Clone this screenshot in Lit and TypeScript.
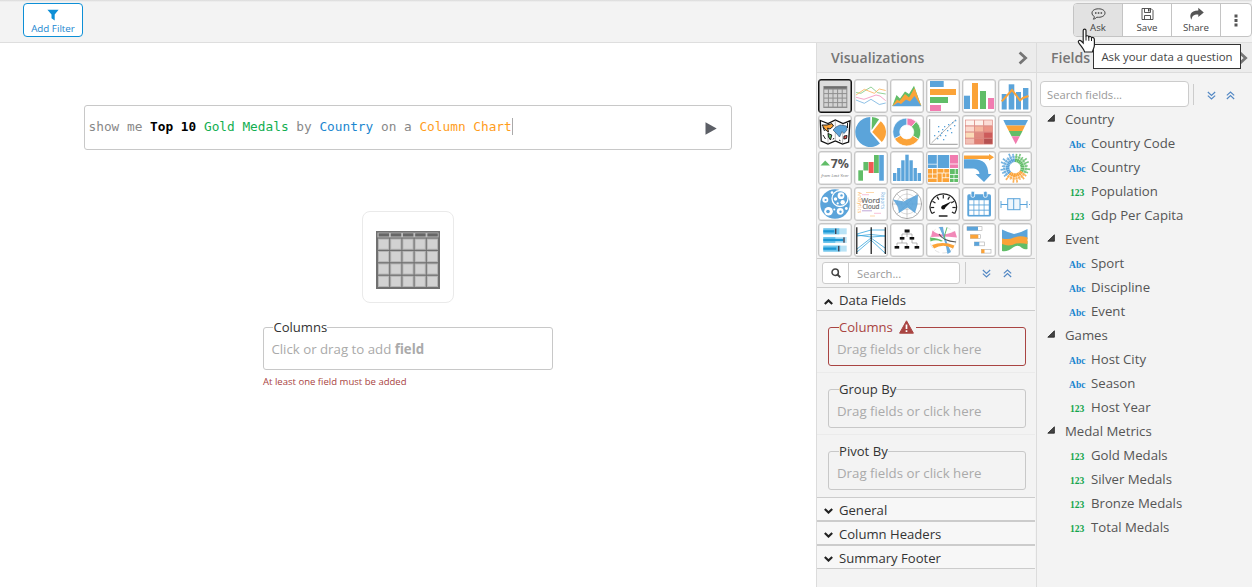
import { LitElement, html, svg, css } from "lit";
import { customElement, property } from "lit/decorators.js";

const B = "#5ba4da", O = "#fba338", G = "#61bd68", P = "#f17cb0", R = "#f15854";

const rects = (color: string, list: number[][]) =>
  list.map(([x, y, w, h]) => svg`<rect x=${x} y=${y} width=${w} height=${h} fill=${color}></rect>`);

const arc = (cx: number, cy: number, r: number, a0: number, a1: number, inner = 0) => {
  const p = (a: number, q: number) => {
    const t = ((a - 90) * Math.PI) / 180;
    return `${(cx + q * Math.cos(t)).toFixed(2)} ${(cy + q * Math.sin(t)).toFixed(2)}`;
  };
  const big = a1 - a0 > 180 ? 1 : 0;
  return inner
    ? `M${p(a0, r)}A${r} ${r} 0 ${big} 1 ${p(a1, r)}L${p(a1, inner)}A${inner} ${inner} 0 ${big} 0 ${p(a0, inner)}Z`
    : `M${cx} ${cy}L${p(a0, r)}A${r} ${r} 0 ${big} 1 ${p(a1, r)}Z`;
};

const sunburst = () => {
  const out: unknown[] = [];
  for (let i = 0; i < 24; i++) {
    const a = i * 15;
    const c = a < 120 ? G : a < 225 ? O : B;
    const len = [14, 15.2, 12.8, 15, 13.2, 14.6][(i * 5 + (i >> 2)) % 6];
    out.push(svg`<path d=${arc(17, 16.7, 9.2, a, a + 14, 5.6)} fill=${c}></path>
      <path d=${arc(17, 16.7, 12, a + 1, a + 13, 9.5)} fill=${c} opacity=".85"></path>
      <path d=${arc(17, 16.7, len, a + 3, a + 10, 12)} fill=${c} opacity=".85"></path>`);
  }
  return out;
};

const gaugeTicks = () =>
  [-90, -60, -30, 0, 30, 60, 90].map(
    (a) => svg`<path d="M17.3 8v3.4" transform="rotate(${a} 17.3 20.5)"></path>`
  );

const icons = [
  // table
  svg`<rect x="5.3" y="7" width="24" height="22" fill="#8f8f8f"></rect>
    ${rects("#6d6d6d", [[6, 7.5, 22.6, 2]])}
    ${[0, 1, 2, 3].map((r) => rects("#d3d3d3", [0, 1, 2, 3, 4].map((c) => [6.3 + c * 4.6, 10.6 + r * 4.5, 3.6, 3.5])))}`,
  // line
  svg`<g fill="none" stroke-width="0.8" opacity=".85"><path stroke=${G} d="M2 13.5L7 14.3 12 11 17 8 23.7 13.7 31.7 15"></path>
    <path stroke=${O} d="M2 16L10.3 10.3 20.3 14.3 25.3 10 31.7 11.5"></path>
    <path stroke=${P} d="M2 18.3L10 20.3 22 16 26 17 31.7 21.7"></path>
    <path stroke=${B} d="M2 21L10.3 24.3 17 20.3 25.3 25.5 31.7 24"></path></g>`,
  // area
  svg`<path fill=${G} d="M2.3 27L6.5 16 10 19.5 15 12.5 19 15 24 6.7 31.3 27z"></path>
    <path fill=${O} d="M2.3 27L7 20.5 9.5 22 15 15 19 18.5 24.5 9 31.3 27z"></path>
    <path fill=${B} d="M2.3 27.3L8 23.5 11 25 16 20.5 20 22.5 24.5 17 31.3 27.3z"></path>`,
  // bar
  [rects(B, [[4, 2, 13.7, 6]]), rects(O, [[4, 10, 26, 6]]), rects(G, [[4, 18, 18, 6]]), rects(P, [[4, 26, 11, 6]])],
  // column
  [rects(B, [[2, 16.7, 6, 13.3]]), rects(O, [[10, 4, 6, 26]]), rects(G, [[18, 12, 6, 18]]), rects(P, [[26, 19, 6, 11]])],
  // combo
  svg`${rects(B, [[3.7, 15, 5, 15.5], [10.7, 5.3, 5.6, 25.2], [18, 13, 5, 17.5], [25, 9, 5.4, 21.5]])}
    <path d="M3.7 22.3L14 11 22 21.3 25 19 30.5 17" fill="none" stroke=${O} stroke-width="2"></path>`,
  // map
  svg`<path d="M2.3 5.5L10 8.6 17.3 5 25 8.6 32 5.8 30.6 27 24.5 29 17.3 26 10 29 3.2 26z" fill="#fff" stroke="#111" stroke-width="1.3"></path>
    <path d="M10 8.6V29M17.3 5V26M25 8.6L24.5 29" stroke="#777" stroke-width=".5"></path>
    <path d="M4 10L9 10 14 8.6 15.5 11 12 14 9.6 13 10.5 17 7 14.5z" fill=${O} stroke="#111" stroke-width=".9"></path>
    <path d="M15 15L18 12 22 10 28.5 11 29 15 26 18.5 24 16.5 21.5 22 18 18z" fill=${B} stroke="#3b5e80" stroke-width=".7"></path>
    <path d="M10 18.5L13.8 20 12.5 25 10.5 22z" fill=${G} stroke="#111" stroke-width=".9"></path>
    <path d="M26 21L29 20.5 28.5 23.5 25.8 24z" fill=${R} stroke="#111" stroke-width=".9"></path>
    <path d="M5 12l1.5 4M5 20l2.5 4M21 25l1.5.8M15 24.5l1-1.5M29.5 8v5" stroke="#222" stroke-width="1"></path>`,
  // pie
  svg`<path d=${arc(16.3, 17, 15, 140, 360)} fill=${B}></path>
    <path d=${arc(17.6, 15, 13, 2, 35)} fill=${G}></path><path d=${arc(18.2, 17, 13.8, 38, 136)} fill=${O}></path>`,
  // donut
  svg`<g stroke="#fff" stroke-width=".7"><path d=${arc(16.8, 17, 14, 0, 42, 7)} fill=${P}></path><path d=${arc(16.8, 17, 14, 42, 122, 7)} fill=${G}></path>
    <path d=${arc(16.8, 17, 14, 122, 242, 7)} fill=${O}></path><path d=${arc(16.8, 17, 14, 242, 360, 7)} fill=${B}></path></g>`,
  // scatter
  svg`<path d="M3.7 4V29.3H31.7" stroke="#999" fill="none" stroke-width="1"></path><path d="M5.5 28L30 4.5" stroke="#aaa" stroke-width=".9"></path>
    ${rects(B, [[12, 11, 1.3, 1.3], [8, 20, 1.3, 1.3], [12, 16, 1.3, 1.3], [11, 23, 1.3, 1.3], [15, 17.5, 1.3, 1.3], [16, 14, 1.3, 1.3], [18, 11, 1.3, 1.3], [19, 20, 1.3, 1.3], [21, 15, 1.3, 1.3], [24, 13, 1.3, 1.3], [22, 9, 1.3, 1.3], [26, 7, 1.3, 1.3], [28, 10, 1.3, 1.3], [25, 17, 1.3, 1.3], [17, 24, 1.3, 1.3], [29, 5, 1.3, 1.3], [14, 20, 1.3, 1.3]])}`,
  // heat map
  svg`${["#fdf3ee", "#fdf1eb", "#fbdcd5", "#fbd9cd", "#f4b79f", "#ec9486", "#fbdcb8", "#e08a80", "#cd5b5b", "#f2c0b4", "#df7f74", "#b65151"].map(
    (c, i) => svg`<rect x=${3.6 + (i % 3) * 9.1} y=${5 + Math.floor(i / 3) * 6.1} width="8.8" height="5.8" fill=${c} stroke="#d98078" stroke-width=".6"></rect>`
  )}`,
  // funnel
  svg`<path d="M5.3 5H30L27.2 10.6H8z" fill=${B}></path><path d="M8 10.6H27.2L24.5 16H10.8z" fill=${O}></path>
    <path d="M10.8 16H24.5L21.8 21.2H13.6z" fill=${G}></path><path d="M13.6 21.2H21.8L17.7 29.3z" fill=${P}></path>`,
  // kpi
  svg`<path d="M2.5 14.6L7.2 9.6 12 14.6z" fill=${G}></path>
    <text x="12.8" y="16.5" font-size="11.5" font-weight="700" fill="#555" textLength="18.2" lengthAdjust="spacingAndGlyphs">7%</text>
    <text x="3.2" y="25.6" font-size="4.2" font-style="italic" fill="#777" textLength="27.4" lengthAdjust="spacingAndGlyphs">from Last Year</text>`,
  // waterfall
  [rects(G, [[4.3, 19.3, 4.7, 10.4], [9.4, 11, 5, 8.5], [20, 4, 4.8, 18]]), rects(R, [[14.7, 11, 4.9, 11]]), rects(B, [[25.2, 4, 4.6, 25.7]])],
  // histogram
  rects(B, [[3, 22, 3.4, 8], [7.1, 17, 3.4, 13], [11.2, 9.3, 3.4, 20.7], [15.3, 3.7, 3.4, 26.3], [19.4, 9.3, 3.4, 20.7], [23.5, 17, 3.4, 13], [27.6, 22, 3.4, 8]]),
  // tree map
  [
    rects(B, [[2, 4, 8.8, 8.8], [2, 13.5, 8.8, 3.5], [11.7, 4, 11.5, 13]]),
    rects(P, [[24, 4, 8, 8.6], [24, 13.4, 8, 3.6]]),
    rects(O, [[2, 18, 4, 4.6], [6.7, 18, 4, 4.6], [11.5, 18, 6, 3.6], [18.2, 18, 5, 3.6], [2, 23.4, 4, 3.4], [6.7, 23.4, 4, 3.4], [2, 27.6, 8.7, 3.4], [11.5, 22.4, 4.2, 8.6], [16.5, 22.4, 3, 4], [20.2, 22.4, 3, 4], [16.5, 27.2, 6.7, 3.8]]),
    rects(G, [[24, 18, 4.8, 5], [29.5, 18, 2.5, 5], [24, 23.8, 3.6, 3.4], [28.3, 23.8, 3.7, 3.4], [24, 28, 3.6, 3], [28.3, 28, 3.7, 3]]),
  ],
  // flow
  svg`<path d="M2 8.3H12C21 8.3 26.3 13 26.3 23H29.5L22 31 13.5 23H17.5C17 19.5 14.5 17.6 10 17.6H2z" fill=${B}></path>
    <path d="M2 4.5H27V3L32 6.3 27 9.6V8H2z" fill=${O}></path>`,
  // sunburst
  svg`${sunburst()}`,
  // bubbles
  svg`<circle cx="17" cy="17" r="14.8" fill=${B}></circle><g fill=${B} stroke="#fff" stroke-width="1.3"><circle cx="22" cy="11.5" r="8"></circle></g>
    <g fill="#fff"><circle cx="7.3" cy="12.8" r="3"></circle><circle cx="10.5" cy="24.3" r="4.3"></circle><circle cx="22.2" cy="24.3" r="3.4"></circle><circle cx="14" cy="5.6" r="1.3"></circle><circle cx="23" cy="8.7" r="3.4"></circle><circle cx="17.5" cy="12" r="1.7"></circle><circle cx="24.7" cy="15.2" r="2.2"></circle><circle cx="19.7" cy="16.4" r="1.1"></circle><circle cx="28.3" cy="21.5" r="1.4"></circle><circle cx="16.3" cy="22.6" r="1"></circle></g>
    <g fill=${B}><circle cx="7.6" cy="13" r="1.1"></circle><circle cx="10" cy="24.5" r="1.8"></circle><circle cx="23.5" cy="8.4" r="1.2"></circle><circle cx="22.5" cy="24.8" r="1.2"></circle></g>`,
  // word cloud
  svg`<text fill="#6c6c6c" stroke="#6c6c6c" stroke-width=".2"><tspan x="7.2" y="16.2" font-size="7.6" textLength="19" lengthAdjust="spacingAndGlyphs">Word</tspan><tspan x="8.4" y="21.9" font-size="6.6" textLength="17" lengthAdjust="spacingAndGlyphs">Cloud</tspan></text>
    <text transform="translate(3.6 5) rotate(90)" font-size="4.4" fill=${O} textLength="21">Analytics</text>
    <text transform="translate(27.2 5) rotate(90)" font-size="4.4" fill=${B} textLength="17">Reports</text>
    <path d="M8 7.7H15M20 26.3H27" stroke=${P} stroke-width=".8" opacity=".6"></path><path d="M12 5.5H20M16 29H21" stroke=${O} stroke-width=".7" opacity=".6"></path><path d="M8 23.8H18" stroke="#8b5cb8" stroke-width=".9" opacity=".6"></path>`,
  // radar
  svg`<g fill="none" stroke="#8a8a8a" stroke-width=".7"><circle cx="17" cy="17" r="14.6"></circle><circle cx="17" cy="17" r="10" stroke="#ccc"></circle><circle cx="17" cy="17" r="5.5" stroke="#ccc"></circle></g>
    <path d="M17 2.4V31.6M2.4 17H31.6M6.7 6.7L27.3 27.3M27.3 6.7L6.7 27.3" stroke="#9a9a9a" stroke-width=".5"></path>
    <path d="M3 12.5L14 14.5 17 12.5 28 7.5 27.5 17 25 26 17.5 20.5 9 26 8 20z" fill=${B} opacity=".9"></path>`,
  // gauge
  svg`<g fill="none" stroke="#222" stroke-width="1.2"><path d="M5.8 26.5A13.2 13.2 0 1 1 28.8 26.5M6 26.5l2.7-1.6M28.6 26.5l-2.7-1.6"></path>${gaugeTicks()}<path d="M12.8 29H21.5" stroke-width="1.5"></path></g>
    <path d="M16.2 18.8L25.8 14.2 18 21.8z" fill="#111"></path><circle cx="17.2" cy="20.5" r="2" fill="#111"></circle>`,
  // calendar
  svg`<rect x="5.3" y="7.3" width="23.7" height="22.3" rx="1.6" fill=${B}></rect><g fill=${B} stroke="#fff" stroke-width=".8"><rect x="9" y="4.3" width="3.6" height="6" rx="1.4"></rect><rect x="21.6" y="4.3" width="3.6" height="6" rx="1.4"></rect></g>
    ${[0, 1, 2].map((r) => rects("#fff", [0, 1, 2, 3].map((c) => [7.2 + c * 5.1, 13.2 + r * 5.2, 4.3, 4.3])))}`,
  // box plot
  svg`<g fill="none" stroke=${B} stroke-width="1"><path d="M3 17.5H10M22 17.5H29M3 14V21M29 14V21"></path><rect x="9.7" y="11.7" width="12.3" height="11" fill="#eef6fc"></rect><path d="M15.7 11.7V22.7"></path></g>${rects(B, [[31, 17, 1, 1]])}`,
  // bullet
  [rects("#b9e3f6", [[5.3, 5.3, 23.4, 6], [5.3, 14, 23.4, 6], [5.3, 22.6, 23.4, 6]]), rects("#6fc5ec", [[5.3, 5.3, 16, 6], [5.3, 14, 12, 6], [5.3, 22.6, 17, 6]]), rects("#1b97d4", [[5.3, 7.2, 11, 2.3], [5.3, 15.8, 20, 2.4], [5.3, 24.5, 13, 2.3]]), rects("#445", [[17, 5.6, 1.4, 5.4], [25.3, 14.3, 1.4, 5.4], [20, 22.9, 1.4, 5.4]])],
  // parallel coordinates
  svg`<g stroke="#35a5dc" fill="none" stroke-width=".8"><path d="M3 11L17 7 31 7M3 13L17 11.5 31 13M3 12L17 14 31 13M3 26L17 15 31 25M3 29L17 17 31 30"></path></g>
    <path d="M2.8 4.3V31M17.2 4.3V31M31.3 4.3V31" stroke="#111" stroke-width="1.2"></path>`,
  // hierarchy
  svg`<path d="M17 7V14M12 14V11H22V14M7 24V20H17V24M12 15V20M27 24V20H22V15" fill="none" stroke="#999" stroke-width=".7"></path>
    ${rects("#111", [[14.6, 6.5, 5, 3], [9.8, 14, 4.6, 2.6], [19.6, 14, 4.6, 2.6], [4.6, 23, 4.6, 2.6], [14.6, 23, 4.6, 2.6], [24.6, 23, 4.6, 2.6]])}`,
  // chord
  svg`<circle cx="17" cy="17" r="13" fill="none" stroke="#ddd" stroke-width=".8" stroke-dasharray="5 3"></circle>
    <path d="M6.5 7.5Q15 15 29 8L31 14.5Q17 13 5 14z" fill=${P} opacity=".9"></path><path d="M4 14.5Q13 15 17 18L15 18.5Q10 16 4.5 18.5z" fill=${G}></path>
    <path d="M13 4L17 4Q18 14 25 29L21.5 31Q19 16 13 4z" fill=${B} opacity=".9"></path><path d="M6 22Q17 18 28.5 22.5L27 25.5Q17 20 8 25.5z" fill=${O}></path>
    <path d="M13 11Q17 18 30 19" stroke="#555" fill="none" stroke-width="1.1"></path><path d="M18 16Q19 10 21 4.5" stroke=${G} fill="none" stroke-width="1"></path>`,
  // gantt
  svg`<g fill="#fff" stroke="#aaa" stroke-width=".6"><rect x="5" y="3.7" width="15" height="3.8"></rect><rect x="8.3" y="11.7" width="10" height="3.8"></rect><rect x="12.3" y="19" width="10" height="3.8"></rect><rect x="19.3" y="26.3" width="9.7" height="3.8"></rect></g>
    ${rects(B, [[5, 3.7, 11, 3.8], [12.3, 19, 5, 3.8]])}${rects(O, [[8.3, 11.7, 8, 3.8], [19.3, 26.3, 3.2, 3.8]])}`,
  // stream
  svg`<path d="M4 6.5Q9 9 16 11 22 10 29.5 6V16L17 19 4 17z" fill=${B}></path><path d="M4 28Q10 29 15 24.5 20 21 24 25 27 27 29.5 26V18H4z" fill=${G}></path>
    <path d="M4 15.5Q11 17 16 14.5 22 12 29.5 14.5V21Q24 20 18 20.5 11 24 4 21z" fill=${O}></path>`,
];

const doubleDown = svg`<path d="M0.8 0.8L4.3 4 7.8 0.8M0.8 4.3L4.3 7.5 7.8 4.3"></path>`;
const doubleUp = svg`<path d="M0.8 4L4.3 0.8 7.8 4M0.8 7.5L4.3 4.3 7.8 7.5"></path>`;
const expanders = html`<svg class="dbl" viewBox="0 0 8.6 8.3">${doubleDown}</svg><svg class="dbl" viewBox="0 0 8.6 8.3">${doubleUp}</svg>`;

const groups: [string, [string, string][]][] = [
  ["Country", [["Abc", "Country Code"], ["Abc", "Country"], ["123", "Population"], ["123", "Gdp Per Capita"]]],
  ["Event", [["Abc", "Sport"], ["Abc", "Discipline"], ["Abc", "Event"]]],
  ["Games", [["Abc", "Host City"], ["Abc", "Season"], ["123", "Host Year"]]],
  ["Medal Metrics", [["123", "Gold Medals"], ["123", "Silver Medals"], ["123", "Bronze Medals"], ["123", "Total Medals"]]],
];

const shared = css`
  * { box-sizing: border-box; }
  svg { display: block; }
  .dbl { width: 9px; height: 9px; fill: none; stroke: #5388c4; stroke-width: 1.15; }
  .head { height: 30px; flex: none; display: flex; align-items: center; justify-content: space-between; background: #ececec; border-bottom: 1px solid #dcdcdc; font-weight: 600; font-size: 14.1px; color: #757575; padding: 0 8px 0 14px; }
  .head svg { width: 10px; height: 14px; fill: none; stroke: #757575; stroke-width: 2.8; }
  .input { background: #fff; border: 1px solid #ccc; border-radius: 4px; color: #999; font-size: 11.2px; display: flex; align-items: center; }
`;

@customElement("field-well")
class FieldWell extends LitElement {
  @property() label = "";
  @property({ type: Boolean, reflect: true }) invalid = false;
  static styles = css`
    :host { display: block; font-size: 13.1px; color: #333; }
    fieldset { margin: 0; min-width: 0; height: 100%; box-sizing: border-box; border: 1px solid #c8c8c8; border-radius: 3px; padding: 0 var(--well-inset, 8px); }
    legend { padding: 0; margin-left: 2px; height: 18px; line-height: 18px; display: flex; align-items: center; }
    .hint { color: #aaa; line-height: 18px; padding-top: 4px; white-space: nowrap; font-size: 13.25px; }
    svg { width: 15px; height: 14px; margin: 0 2px 1px 6px; }
    :host([invalid]) fieldset { border-color: #a94442; }
    :host([invalid]) legend { color: #a94442; }
  `;
  render() {
    return html`<fieldset>
      <legend>${this.label}${this.invalid
        ? html`<svg viewBox="0 0 15 14"><path d="M7.5 0.8L14.4 13.2H.6z" fill="#a94442" stroke="#a94442" stroke-linejoin="round"></path><path d="M7.5 4.6V9M7.5 10.2V12" stroke="#fff" stroke-width="1.7"></path></svg>`
        : ""}</legend>
      <div class="hint"><slot></slot></div>
    </fieldset>`;
  }
}

@customElement("viz-panel")
class VizPanel extends LitElement {
  static styles = [shared, css`
    :host { display: flex; flex-direction: column; width: 220px; flex: none; border-left: 1px solid #dcdcdc; background: #f3f3f3; padding-right: 1px; }
    .head { margin-right: -1px; }
    .grid { display: grid; grid-template-columns: repeat(6, 34px); grid-auto-rows: 34px; gap: 2px; padding: 6px 0 0 1px; height: 186px; border-bottom: 1px solid #ccc; }
    .tile { background: #fff; border: 1px solid #c6c6c6; border-radius: 3px; box-shadow: inset 0 0 0 .4px #ccc; }
    .tile svg { width: 32px; height: 32px; }
    .tile.on { background: #dcdcdc; border-color: #111; box-shadow: inset 0 0 0 .5px #111; }
    .tools { display: flex; height: 29px; padding: 3px 0 0 5px; border-bottom: 1px solid #ccc; }
    .input { width: 138px; height: 22px; border-radius: 3px; }
    .glass { width: 26px; height: 100%; border-right: 1px solid #ccc; display: grid; place-items: center; margin-right: 8px; }
    .glass svg { width: 10px; height: 10px; }
    .rule { width: 1px; height: 22px; background: #ccc; margin: 0 16px 0 5px; }
    .tools .dbl { margin: 7px 12px 0 0; }
    .sec { height: 24px; display: flex; align-items: center; gap: 6px; padding: 1px 0 0 7px; background: #f7f7f7; font-size: 13.1px; line-height: 18px; color: #333; border-top: 1px solid #ccc; border-bottom: 1px solid #ccc; }
    .sec.open { border-top: 0; height: 23px; padding-top: 2px; }
    .sec svg { width: 9px; height: 6px; margin-top: 3px; fill: none; stroke: #222; stroke-width: 2.1; }
    .well { height: 62px; padding: 7px 9px 6px 11px; border-bottom: 1px solid #ebebeb; }
    .well:last-of-type { border-bottom: 0; }
    .wells field-well { height: 48px; }
    .wells { height: 186px; }
  `];
  render() {
    const up = html`<svg viewBox="0 0 9 6"><path d="M.8 5L4.5 1.4 8.2 5"></path></svg>`;
    const down = html`<svg viewBox="0 0 9 6"><path d="M.8 1L4.5 4.6 8.2 1"></path></svg>`;
    return html`
      <div class="head">Visualizations<svg viewBox="0 0 10 14"><path d="M1.6 1.4L7.6 7 1.6 12.6"></path></svg></div>
      <div class="grid">${icons.map((i, n) => html`<div class="tile ${n ? "" : "on"}"><svg viewBox="1 1 32 32">${i}</svg></div>`)}</div>
      <div class="tools">
        <div class="input"><span class="glass"><svg viewBox="0 0 10 10" fill="none" stroke="#444"><circle cx="4.2" cy="4.2" r="3.2" stroke-width="1.5"></circle><path d="M6.5 6.5L9.3 9.3" stroke-width="1.9"></path></svg></span>Search...</div>
        <span class="rule"></span>${expanders}
      </div>
      <div class="sec open">${up}Data Fields</div>
      <div class="wells">
        ${["Columns", "Group By", "Pivot By"].map((l, n) => html`<div class="well"><field-well label=${l} ?invalid=${n === 0}>Drag fields or click here</field-well></div>`)}
      </div>
      ${["General", "Column Headers", "Summary Footer"].map((l) => html`<div class="sec">${down}${l}</div>`)}
    `;
  }
}

@customElement("fields-panel")
class FieldsPanel extends LitElement {
  static styles = [shared, css`
    :host { display: flex; flex-direction: column; flex: 1; border-left: 1px solid #dcdcdc; background: #f3f3f3; }
    .head { padding-right: 4px; }
    .tools { display: flex; padding: 8px 0 0 3px; height: 34px; }
    .input { width: 149px; height: 26px; padding-left: 6px; }
    .rule { width: 1px; height: 21px; background: #ccc; margin: 3px 13px 0 4px; }
    .tools .dbl { margin: 10px 10px 0 0; }
    .row { height: 24px; display: flex; align-items: center; font-size: 13.2px; color: #555; padding-left: 32px; white-space: nowrap; }
    .row.group { padding-left: 10px; }
    .row.group svg { width: 8px; height: 8px; margin-right: 10px; margin-top: -3px; }
    .type { width: 22px; font: 700 9.6px "Liberation Serif", serif; margin-top: 3px; }
    .abc { color: #1a86cf; }
    .num { color: #12a54c; padding-left: 1px; }
  `];
  render() {
    return html`
      <div class="head">Fields<svg viewBox="0 0 10 14"><path d="M1.6 1.4L7.6 7 1.6 12.6"></path></svg></div>
      <div class="tools"><div class="input">Search fields...</div><span class="rule"></span>${expanders}</div>
      ${groups.map(([g, items]) => html`
        <div class="row group"><svg viewBox="0 0 8 8"><path d="M7.4 .8V7.2H.8z" fill="#444" stroke="#222" stroke-width=".8"></path></svg>${g}</div>
        ${items.map(([t, n]) => html`<div class="row"><span class="type ${t === "Abc" ? "abc" : "num"}">${t}</span>${n}</div>`)}
      `)}
    `;
  }
}

@customElement("app-root")
class AppRoot extends LitElement {
  static styles = [shared, css`
    :host { display: flex; flex-direction: column; position: relative; width: 1252px; height: 587px; overflow: hidden; background: #fff; font-family: "Open Sans", "Noto Sans", sans-serif; font-size: 13px; }
    .bar { height: 43px; flex: none; display: flex; justify-content: space-between; align-items: flex-start; padding: 3px 0 0 23px; background: linear-gradient(#d9d9d9, #f3f3f3 2px); border-bottom: 1px solid #dedede; }
    .add { width: 60px; height: 34px; background: #fff; border: 1px solid #0d8fd6; border-radius: 4px; color: #1a86cf; font-size: 9.8px; display: flex; flex-direction: column; align-items: center; white-space: nowrap; line-height: 13px; }
    .add svg { width: 12px; height: 12px; margin: 5px 0 1px; }
    .acts { display: flex; height: 34px; border: 1px solid #c4c4c4; border-radius: 4px; background: #fff; color: #444; font-size: 9.7px; overflow: hidden; }
    .act { width: 49px; display: flex; flex-direction: column; align-items: center; border-right: 1px solid #c4c4c4; line-height: 13px; }
    .act.on { background: #e2e2e2; }
    .act.more { width: 30px; border: 0; justify-content: center; }
    .act svg { width: 15px; height: 14px; margin: 3px 0 0; }
    .act.more svg { width: 4px; height: 13px; margin: 0; }
    .body { display: flex; flex: 1; min-height: 0; }
    .stage { width: 816px; flex: none; display: flex; flex-direction: column; align-items: center; }
    .ask { width: 648px; height: 45px; margin-top: 62px; border: 1px solid #c8c8c8; border-radius: 3px; display: flex; align-items: center; padding: 0 14px 0 3.5px; font: 12.79px "DejaVu Sans Mono", monospace; color: #888; }
    .q { flex: 1; white-space: pre; display: flex; align-items: center; margin-top: -2px; }
    .q b { color: #000; }
    .green { color: #12ae50; } .blue { color: #1a86cf; } .orange { color: #ff9d1c; }
    .caret { width: 1px; height: 17px; background: #aaa; }
    .ask > svg { width: 12px; height: 13px; margin-top: 2px; }
    .preview { width: 92px; height: 92px; border: 1px solid #eaeaea; border-radius: 8px; margin-top: 61px; padding: 19px 13px 0; }
    .preview svg { width: 64px; height: 58px; }
    .stage field-well { --well-inset: 7.4px; width: 290px; height: 52px; margin-top: 15px; }
    .err { width: 290px; margin-top: 5px; color: #a94442; font-size: 9.55px; line-height: 14px; }
    .tip { position: absolute; left: 1093px; top: 44px; width: 148px; height: 25px; background: #fff; border: 1px solid #333; color: #444; font-size: 11.4px; line-height: 23px; text-align: center; white-space: nowrap; }
    .cursor { position: absolute; left: 1077px; top: 28px; width: 19px; height: 25px; }
  `];
  render() {
    return html`
      <div class="bar">
        <div class="add"><svg viewBox="0 0 12 12"><path d="M.4 .8H11.6L7.7 5.4V11.5L4.5 9.3V5.4z" fill="#0d8fd6"></path></svg>Add Filter</div>
        <div class="acts">
          <div class="act on"><svg viewBox="0 0 15 14"><path d="M7.5 1.8C11.4 1.8 14 3.6 14 6S11.4 10.3 7.5 10.3L5.8 10.2C4.8 11.4 3.5 12 2.4 12.2 3 11.4 3.4 10.5 3.3 9.5 1.8 8.7 1 7.4 1 6 1 3.6 3.6 1.8 7.5 1.8z" fill="none" stroke="#444"></path><path d="M4 5.3h1.5v1.4H4zM6.8 5.3h1.5v1.4H6.8zM9.6 5.3h1.5v1.4H9.6z" fill="#444"></path></svg>Ask</div>
          <div class="act"><svg viewBox="0 0 15 14"><path d="M2 1.5H11L13 3.5V12.5H2zM4.5 1.5V5.5H10.5V1.5M4.5 12.5V8.5H10.5V12.5" fill="none" stroke="#444" stroke-width=".9"></path><path d="M8 2h1.5v2.6H8z" fill="#444"></path></svg>Save</div>
          <div class="act"><svg viewBox="0 0 15 14"><path d="M9.3 .8L14.8 5.4 9.3 10V7.4C5 7.2 2.8 8.6 2.6 12.8 .2 9 .8 3.6 9.3 3.4z" fill="#555"></path></svg>Share</div>
          <div class="act more"><svg viewBox="0 0 4 13"><path d="M.5 .5h3v3h-3zM.5 5h3v3h-3zM.5 9.5h3v3h-3z" fill="#555"></path></svg></div>
        </div>
      </div>
      <div class="body">
        <div class="stage">
          <div class="ask">
            <div class="q"><span>show me </span><b>Top 10</b><span> </span><span class="green">Gold Medals</span><span> by </span><span class="blue">Country</span><span> on a </span><span class="orange">Column Chart</span><span class="caret"></span></div>
            <svg viewBox="0 0 12 13"><path d="M.5 .3L11.7 6.5 .5 12.7z" fill="#5c5f66"></path></svg>
          </div>
          <div class="preview"><svg viewBox="0 0 64 58">
            <rect width="64" height="58" fill="#707070"></rect>
            ${rects("#bdbdbd", [[1.5, 1.6, 61, 4.8]])}
            ${rects("#666", [0, 1, 2, 3, 4].map((c) => [2.6 + c * 12.2, 2.3, 10.4, 3.2]))}
            ${[0, 1, 2, 3].map((r) => rects("#b4b4b4", [0, 1, 2, 3, 4].map((c) => [2 + c * 12.2, 7.6 + r * 12.4, 11.2, 11.2])))}
            ${[0, 1, 2, 3].map((r) => rects("#d2d2d2", [0, 1, 2, 3, 4].map((c) => [3 + c * 12.2, 8.6 + r * 12.4, 9.2, 9.2])))}
          </svg></div>
          <field-well label="Columns">Click or drag to add <b>field</b></field-well>
          <div class="err">At least one field must be added</div>
        </div>
        <viz-panel></viz-panel>
        <fields-panel></fields-panel>
      </div>
      <div class="tip">Ask your data a question</div>
      <svg class="cursor" viewBox="0 0 19 25"><path d="M6.2 2.6C6.2 .6 9 .6 9 2.6V8.4C9.4 7.4 11.6 7.5 11.8 9 12.4 8 14.4 8.3 14.5 9.8 15.4 9 17.4 9.5 17.4 11.4V17C17.4 19.8 16 21 15.4 24H7.6C7 21 4.2 18.4 1.6 14.6 .6 12.8 2.8 11.6 4.2 13L6.2 15z" fill="#fff" stroke="#222" stroke-width="1.2"></path><path d="M9 8V12.5M11.8 9V12.8M14.5 10V13" stroke="#222" stroke-width="1"></path></svg>
    `;
  }
}
